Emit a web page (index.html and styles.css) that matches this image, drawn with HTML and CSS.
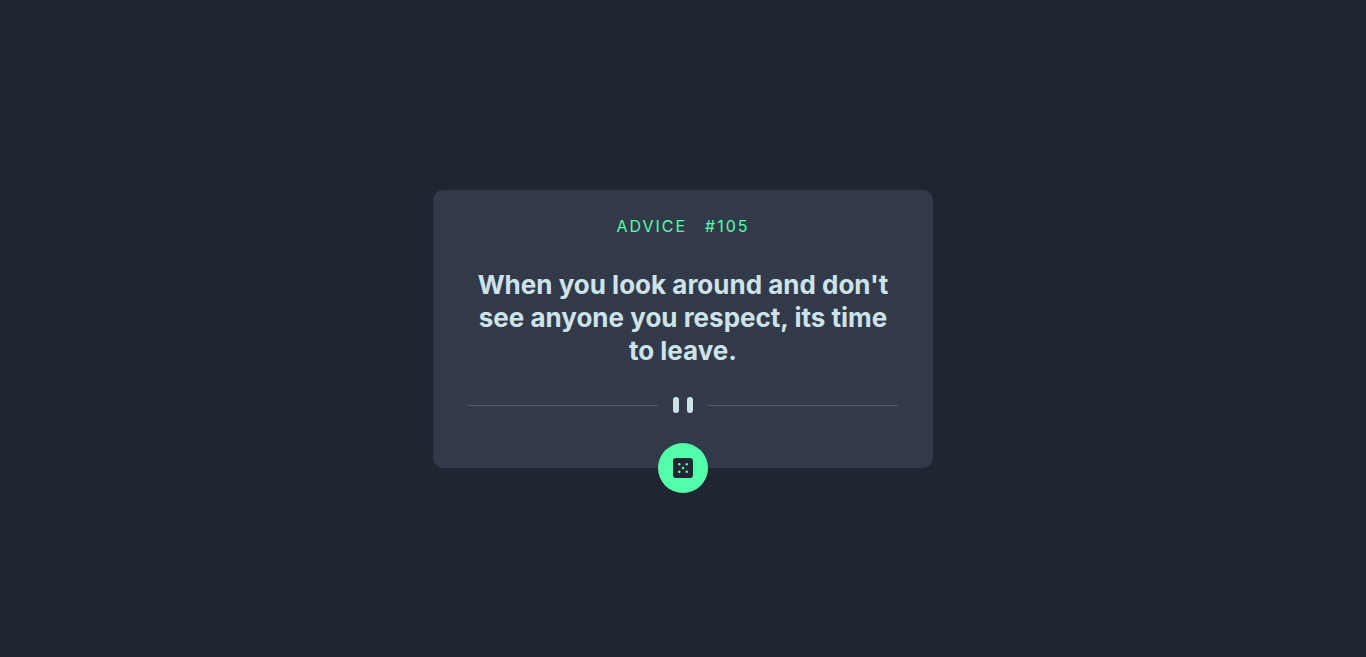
FILE: index.html
```html
<!DOCTYPE html>
<html lang="en">
<head>
<meta charset="utf-8">
<title>Advice generator</title>
<meta name="viewport" content="width=device-width, initial-scale=1">
<link rel="stylesheet" href="styles.css">
</head>
<body>
<main class="card">
  <h1 class="label"><span>ADVICE</span><span>#105</span></h1>
  <p class="quote">When you look around and don't see anyone you respect, its time to leave.</p>
  <div class="divider">
    <svg width="20" height="16" viewBox="0 0 20 16" fill="#cee3e9" aria-hidden="true"><rect width="6" height="16" rx="3"/><rect x="14" width="6" height="16" rx="3"/></svg>
  </div>
  <button class="dice" type="button" aria-label="New advice">
    <svg width="20" height="20" viewBox="0 0 24 24" aria-hidden="true"><rect width="24" height="24" rx="4" fill="#202733"/><g fill="#53ffaa"><circle cx="7.5" cy="7.5" r="1.5"/><circle cx="16.5" cy="7.5" r="1.5"/><circle cx="12" cy="12" r="1.5"/><circle cx="7.5" cy="16.5" r="1.5"/><circle cx="16.5" cy="16.5" r="1.5"/></g></svg>
  </button>
</main>
</body>
</html>
```
FILE: styles.css
```css
* {
  box-sizing: border-box;
}

body {
  margin: 0;
  min-height: 100vh;
  display: flex;
  align-items: center;
  justify-content: center;
  background: #1f2632;
  font-family: Inter, "Open Sans", sans-serif;
}

.card {
  position: relative;
  width: 100%;
  max-width: 500px;
  padding: 24px 35px 55px;
  border-radius: 10px;
  background: #323a49;
  text-align: center;
}

.label {
  display: flex;
  justify-content: center;
  gap: 18px;
  margin: 0 0 30px;
  color: #53ffaa;
  font-size: 16px;
  font-weight: 400;
  line-height: 24px;
  letter-spacing: 2px;
}

.quote {
  margin: 0 0 30px;
  color: #cee3e9;
  font-size: 26px;
  font-weight: 700;
  line-height: 33px;
}

.divider {
  display: flex;
  align-items: center;
  gap: 15px;
}

.divider::before,
.divider::after {
  content: "";
  flex: 1;
  height: 1px;
  margin-top: 1px;
  background: #4f5d74;
}

.dice {
  position: absolute;
  bottom: -25px;
  left: calc(50% - 25px);
  display: grid;
  place-items: center;
  width: 50px;
  height: 50px;
  padding: 0;
  border: 0;
  border-radius: 50%;
  background: #53ffaa;
  cursor: pointer;
}
```
